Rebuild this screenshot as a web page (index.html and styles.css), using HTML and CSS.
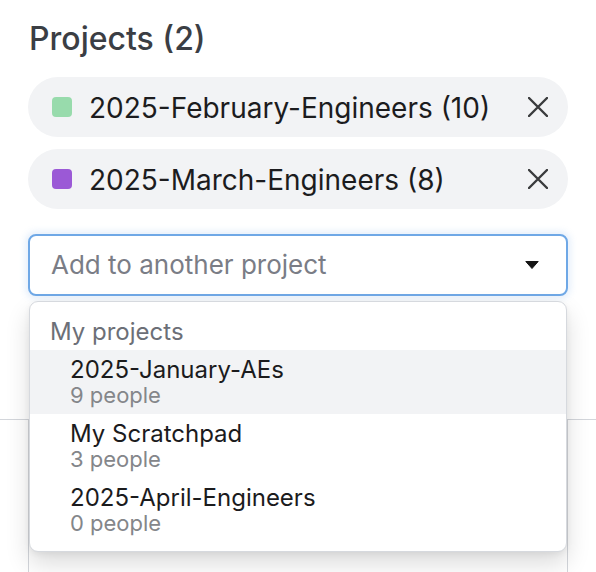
FILE: index.html
```html
<!DOCTYPE html>
<html>
<head>
<meta charset="utf-8">
<link rel="stylesheet" href="styles.css">
</head>
<body>
<div class="panel">
  <h2 class="title">Projects (2)</h2>
  <div class="chips">
    <div class="chip">
      <span class="swatch swatch-green"></span>
      <span class="chip-label">2025-February-Engineers (10)</span>
      <svg class="chip-x" viewBox="0 0 20 20" width="20" height="20"><path d="M1 1 L19 19 M19 1 L1 19" stroke="#3a3b3d" stroke-width="2.4" stroke-linecap="round" fill="none"/></svg>
    </div>
    <div class="chip">
      <span class="swatch swatch-purple"></span>
      <span class="chip-label">2025-March-Engineers (8)</span>
      <svg class="chip-x" viewBox="0 0 20 20" width="20" height="20"><path d="M1 1 L19 19 M19 1 L1 19" stroke="#3a3b3d" stroke-width="2.4" stroke-linecap="round" fill="none"/></svg>
    </div>
  </div>
  <div class="select-wrap">
    <div class="select">
      <span class="placeholder">Add to another project</span>
      <svg class="caret" viewBox="0 0 14 8" width="14" height="8"><path d="M0.8 0.5 H13.2 L7 7.5 Z" fill="#161616" stroke="#161616" stroke-width="1" stroke-linejoin="round"/></svg>
    </div>
    <div class="menu">
      <div class="menu-header">My projects</div>
      <div class="menu-item active">
        <div class="item-name">2025-January-AEs</div>
        <div class="item-sub">9 people</div>
      </div>
      <div class="menu-item">
        <div class="item-name">My Scratchpad</div>
        <div class="item-sub">3 people</div>
      </div>
      <div class="menu-item">
        <div class="item-name">2025-April-Engineers</div>
        <div class="item-sub">0 people</div>
      </div>
    </div>
  </div>
  <div class="underlay">
    <div class="underlay-box"></div>
  </div>
</div>
</body>
</html>
```

FILE: styles.css
```css
html, body {
  margin: 0;
  padding: 0;
  background: #ffffff;
  font-family: Inter, "Noto Sans", sans-serif;
}
body {
  width: 596px;
  height: 572px;
  overflow: hidden;
}
.panel {
  padding: 21px 28px 0 28px;
}
.title {
  margin: 0 0 20px 1px;
  font-size: 32px;
  line-height: 36px;
  font-weight: 500;
  color: #3b3e44;
}
.chips {
  display: flex;
  flex-direction: column;
  gap: 12px;
}
.chip {
  height: 60px;
  border-radius: 30px;
  background: #f2f3f5;
  display: flex;
  align-items: center;
  padding: 0 20px 0 24px;
  box-sizing: border-box;
}
.swatch {
  width: 20px;
  height: 20px;
  border-radius: 4px;
  flex: none;
}
.swatch-green { background: #98dbac; }
.swatch-purple { background: #9b59d6; }
.chip-label {
  margin-left: 17px;
  font-size: 28px;
  line-height: 34px;
  padding-top: 2px;
  color: #1c1c1e;
  flex: 1;
}
.chip-x {
  flex: none;
}
.select-wrap {
  position: relative;
  margin-top: 25px;
}
.select {
  height: 62px;
  box-sizing: border-box;
  border: 2px solid #6fa8e6;
  border-radius: 8px;
  box-shadow: 0 0 6px 3px rgba(120, 170, 235, 0.18);
  display: flex;
  align-items: center;
  padding: 0 27px 0 21px;
  background: #fff;
}
.placeholder {
  flex: 1;
  font-size: 26px;
  line-height: 32px;
  color: #7a7d86;
}
.caret { flex: none; }
.menu {
  position: absolute;
  z-index: 2;
  left: 1px;
  right: 1px;
  top: 67px;
  height: 251px;
  box-sizing: border-box;
  background: #fff;
  border: 1px solid #d6d9de;
  border-radius: 9px;
  box-shadow: 0 12px 24px rgba(0, 0, 0, 0.14), 0 2px 6px rgba(0, 0, 0, 0.06);
  overflow: hidden;
}
.menu-header {
  height: 48px;
  padding: 16px 0 0 20px;
  box-sizing: border-box;
  font-size: 24px;
  line-height: 28px;
  color: #6c6f77;
}
.menu-item {
  height: 64px;
  box-sizing: border-box;
  padding: 7px 0 0 40px;
}
.menu-item.active { background: #f2f3f5; }
.item-name {
  font-size: 24px;
  line-height: 26px;
  color: #1b1b1d;
}
.item-sub {
  font-size: 22px;
  line-height: 24px;
  color: #84868a;
}
.underlay {
  margin: 123px -28px 0 -28px;
  border-top: 1px solid #d3d6db;
  height: 160px;
  padding: 0 28px;
}
.underlay-box {
  height: 100%;
  border-left: 1px solid #d3d6db;
  border-right: 1px solid #d3d6db;
}
```
